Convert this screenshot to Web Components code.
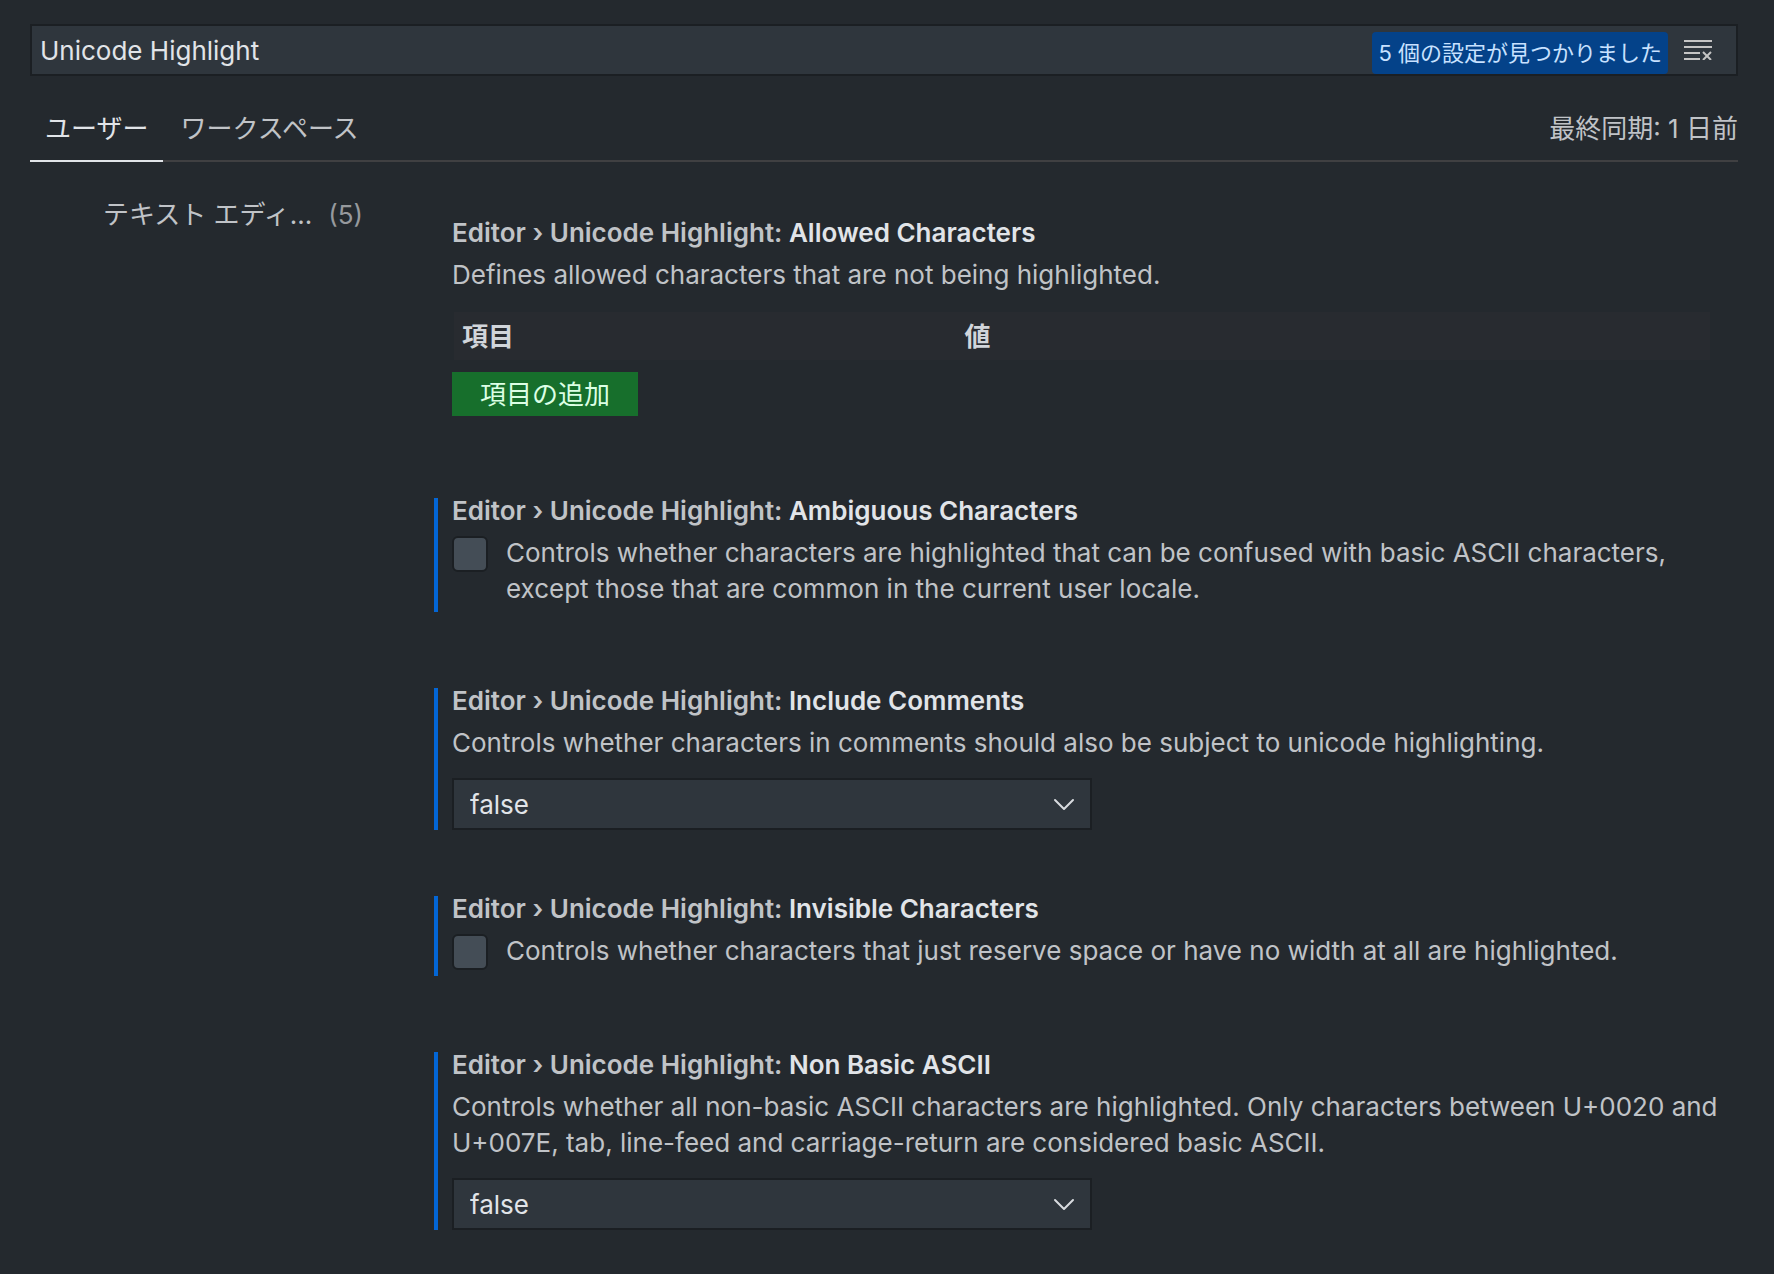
<!DOCTYPE html>
<html lang="ja">
<head>
<meta charset="utf-8">
<title>設定</title>
<style>
  :root {
    --bg: #24292e;
    --field: #2f363d;
    --edge: #1b1f23;
    --fg: #e1e4e8;
    --muted: #c0c3c7;
    --focus: #0366d6;
  }
  html { background: var(--bg); }
  body {
    margin: 0;
    color: var(--muted);
    font: 26px/36px Inter, "Noto Sans CJK JP", sans-serif;
  }
</style>
</head>
<body>
<settings-editor>
  <settings-search slot="search" query="Unicode Highlight">5 個の設定が見つかりました</settings-search>
  <settings-tabs slot="tabs">
    <settings-tab selected>ユーザー</settings-tab>
    <settings-tab>ワークスペース</settings-tab>
    <span slot="status">最終同期: 1 日前</span>
  </settings-tabs>
  <settings-toc slot="toc" count="(5)">テキスト エディ...</settings-toc>

  <setting-item category="Editor › Unicode Highlight: " name="Allowed Characters">
    Defines allowed characters that are not being highlighted.
    <setting-table slot="control" key-label="項目" value-label="値" add-label="項目の追加"></setting-table>
  </setting-item>
  <setting-check category="Editor › Unicode Highlight: " name="Ambiguous Characters">Controls whether characters are highlighted that can be confused with basic ASCII characters, except those that are common in the current user locale.</setting-check>
  <setting-item modified category="Editor › Unicode Highlight: " name="Include Comments">
    Controls whether characters in comments should also be subject to unicode highlighting.
    <setting-select slot="control" label="Include Comments"></setting-select>
  </setting-item>
  <setting-check category="Editor › Unicode Highlight: " name="Invisible Characters">Controls whether characters that just reserve space or have no width at all are highlighted.</setting-check>
  <setting-item modified category="Editor › Unicode Highlight: " name="Non Basic ASCII">
    Controls whether all non-basic ASCII characters are highlighted. Only characters between U+0020 and U+007E, tab, line-feed and carriage-return are considered basic ASCII.
    <setting-select slot="control" label="Non Basic ASCII"></setting-select>
  </setting-item>
</settings-editor>

<script>
const define = (name, html) => customElements.define(name, class extends HTMLElement {
  constructor() {
    super();
    this.attachShadow({ mode: "open" }).innerHTML = html;
  }
  connectedCallback() {
    // Copies host attributes into the parts of the shadow tree that ask for them.
    for (const el of this.shadowRoot.querySelectorAll("[data-text]"))
      el.textContent = this.getAttribute(el.dataset.text) || "";
    for (const el of this.shadowRoot.querySelectorAll("[data-value]"))
      el.value = this.getAttribute(el.dataset.value) || "";
    for (const el of this.shadowRoot.querySelectorAll("[data-label]"))
      el.setAttribute("aria-label", this.getAttribute(el.dataset.label) || "");
  }
});

define("settings-editor", `
  <style>
    :host { display: block; padding: 24px 36px 24px 30px; }
    .body { display: flex; align-items: flex-start; }
    nav { flex: 0 0 404px; padding-top: 35px; box-sizing: border-box; }
    main { flex: 1; min-width: 0; padding: 58px 16px 0 0; }
    main ::slotted(:last-child) { margin-bottom: 0; }
  </style>
  <slot name="search"></slot>
  <slot name="tabs"></slot>
  <div class="body">
    <nav><slot name="toc"></slot></nav>
    <main><slot></slot></main>
  </div>`);

define("settings-search", `
  <style>
    :host {
      display: flex; align-items: center; box-sizing: border-box; height: 52px;
      background: var(--field); border: 2px solid var(--edge);
    }
    input {
      flex: 1; min-width: 0; padding: 2px 8px 0; border: 0; outline: 0;
      background: none; color: var(--fg); font: inherit;
    }
    .count {
      align-self: flex-end; padding: 0 6px; border-radius: 4px;
      background: #044289; color: #c8e1ff; font-size: 22px; line-height: 42px;
    }
    button { margin: 0 24px 0 16px; padding: 0; border: 0; background: none; }
    svg { display: block; }
  </style>
  <input type="text" aria-label="設定の検索" data-value="query">
  <span class="count"><slot></slot></span>
  <button aria-label="設定の検索結果をクリア">
    <svg width="28" height="20" viewBox="0 0 28 20" fill="none" stroke="#c5c5c5" stroke-width="2">
      <path d="M0 1h28M0 7h28M0 13h16M0 19h16M19 12l8 8M27 12l-8 8"/>
    </svg>
  </button>`);

define("settings-tabs", `
  <style>
    :host {
      display: flex; margin-top: 20px; height: 66px; box-sizing: border-box;
      box-shadow: inset 0 -2px #404042; line-height: 66px;
    }
    .tabs { display: flex; flex: 1; gap: 2px; }
  </style>
  <div class="tabs" role="tablist"><slot></slot></div>
  <slot name="status"></slot>`);

define("settings-tab", `
  <style>
    :host { display: flex; }
    button {
      padding: 2px 15px 0; border: 0; border-bottom: 2px solid transparent;
      background: none; color: var(--muted); font: inherit; line-height: 62px;
    }
    :host([selected]) button { color: var(--fg); border-color: var(--fg); }
  </style>
  <button role="tab"><slot></slot></button>`);

define("settings-toc", `
  <style>
    :host { display: flex; padding-left: 73px; }
    a { display: flex; gap: 16px; color: inherit; text-decoration: none; }
    .count { color: #96999d; }
  </style>
  <a href="#"><span><slot></slot></span><span class="count" data-text="count"></span></a>`);

const itemStyle = `
    :host { display: block; margin-bottom: 66px; padding-left: 14px; border-left: 4px solid transparent; }
    :host([modified]) { border-color: var(--focus); }
    h2 { margin: 0 0 11px; font-size: 26px; line-height: 26px; font-weight: 600; white-space: pre-wrap; }
    b { color: var(--fg); font-weight: 600; }
    p { margin: 0; }`;
const heading = `<h2><span data-text="category"></span><b data-text="name"></b></h2>`;

define("setting-item", `
  <style>${itemStyle}</style>
  ${heading}
  <p><slot></slot></p>
  <slot name="control"></slot>`);

define("setting-check", `
  <style>
    ${itemStyle}
    :host { margin-bottom: 76px; padding-bottom: 5px; border-color: var(--focus); }
    .row { display: flex; align-items: flex-start; gap: 18px; }
    input {
      appearance: none; flex: none; width: 36px; height: 36px; margin: 1px 0; box-sizing: border-box;
      background: #444d56; border: 2px solid var(--edge); border-radius: 6px;
    }
  </style>
  ${heading}
  <div class="row">
    <input type="checkbox" id="value">
    <label for="value"><slot></slot></label>
  </div>`);

define("setting-select", `
  <style>
    :host { display: grid; max-width: 640px; margin-top: 17px; align-items: center; }
    select, svg { grid-area: 1 / 1; }
    select {
      appearance: none; width: 100%; height: 52px; padding: 2px 16px 0; box-sizing: border-box;
      background: var(--field); border: 2px solid var(--edge); border-radius: 0;
      color: var(--fg); font: inherit;
    }
    svg { justify-self: end; margin-right: 17px; pointer-events: none; }
  </style>
  <select data-label="label"><option>false</option></select>
  <svg width="22" height="14" viewBox="0 0 22 14" fill="none" stroke="#d8dbdf" stroke-width="2" stroke-linecap="round" stroke-linejoin="round">
    <path d="M2 3l9 9 9-9"/>
  </svg>`);

define("setting-table", `
  <style>
    :host { display: block; margin: 19px 12px 82px 0; }
    table { width: 100%; table-layout: fixed; border-spacing: 0; padding-left: 2px; }
    th {
      box-sizing: border-box; height: 48px; padding: 2px 8px 0; background: #282b30; color: #d1d5da;
      line-height: 46px; font-weight: 700; text-align: left;
    }
    th:first-child { width: 40%; }
    button {
      display: block; margin-top: 12px; padding: 2px 28px 0; border: 0; height: 44px;
      background: #176f2c; color: #dcffe4; font: inherit; line-height: 42px;
    }
  </style>
  <table><thead><tr><th scope="col" data-text="key-label"></th><th scope="col" data-text="value-label"></th></tr></thead></table>
  <button data-text="add-label"></button>`);
</script>
</body>
</html>
